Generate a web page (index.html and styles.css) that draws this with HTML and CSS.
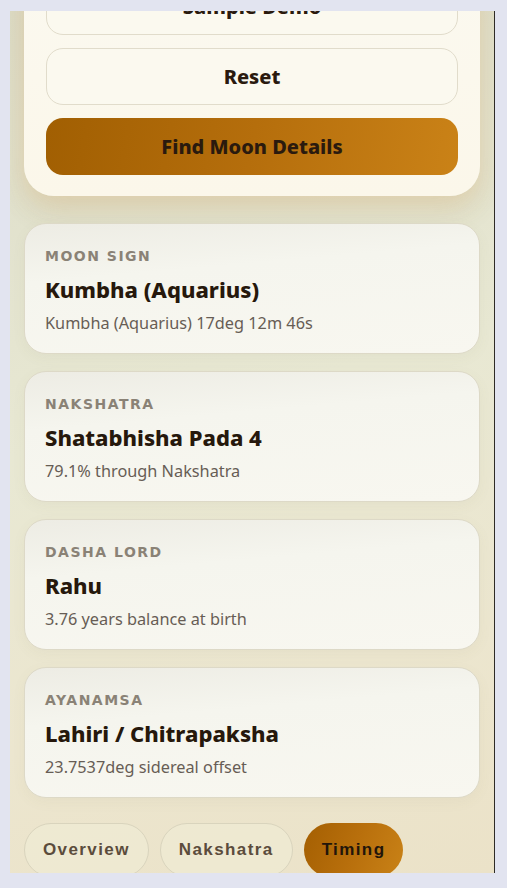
FILE: index.html
```html
<!DOCTYPE html>
<html lang="en">
<head>
<meta charset="UTF-8">
<title>Moon Details</title>
<link rel="stylesheet" href="styles.css">
</head>
<body>
<div class="frame">
  <div class="scroller">
    <!-- Input form (scrolled partly out of view) -->
    <div class="form-card">
      <button class="btn">Sample Demo</button>
      <button class="btn">Reset</button>
      <button class="btn primary">Find Moon Details</button>
    </div>

    <div class="result">
      <div class="label">Moon Sign</div>
      <div class="value">Kumbha (Aquarius)</div>
      <div class="note">Kumbha (Aquarius) 17deg 12m 46s</div>
    </div>
    <div class="result">
      <div class="label">Nakshatra</div>
      <div class="value">Shatabhisha Pada 4</div>
      <div class="note">79.1% through Nakshatra</div>
    </div>
    <div class="result">
      <div class="label">Dasha Lord</div>
      <div class="value">Rahu</div>
      <div class="note">3.76 years balance at birth</div>
    </div>
    <div class="result">
      <div class="label">Ayanamsa</div>
      <div class="value">Lahiri / Chitrapaksha</div>
      <div class="note">23.7537deg sidereal offset</div>
    </div>

    <div class="tabs">
      <button class="tab">Overview</button>
      <button class="tab">Nakshatra</button>
      <button class="tab active">Timing</button>
    </div>
  </div>
</div>
</body>
</html>
```

FILE: styles.css
```css
body {
    margin: 0;
    padding: 11px 11px 15px 10px;
    background: #e2e4f0;
    font-family: "Noto Sans", "Open Sans", sans-serif;
}
.frame {
    width: 484px;
    height: 862px;
    overflow: hidden;
    border-right: 1px solid #2e2b26;
    background: linear-gradient(165deg, #dcdcc8 0%, #e8e8d3 45%, #ece6cf 75%, #ebe2c8 100%);
}
.scroller {
    margin-top: -55px;
    padding: 0 14px 40px 14px;
    display: flex;
    flex-direction: column;
    gap: 17px;
}
.form-card {
    background: linear-gradient(180deg, #fbf9f0 0%, #fbf7ea 100%);
    border-radius: 30px;
    padding: 22px 22px 21px 22px;
    display: flex;
    flex-direction: column;
    gap: 13px;
    box-shadow: 0 8px 26px rgba(240, 190, 120, 0.3), 0 18px 30px rgba(90, 80, 40, 0.08);
    margin-bottom: 10px;
}
.btn {
    height: 57px;
    border: 1px solid #e1dccb;
    border-radius: 17px;
    background: #fbf9ef;
    color: #2a1a0e;
    font-family: "Noto Sans", sans-serif;
    font-size: 20px;
    font-weight: 800;
    cursor: pointer;
}
.btn.primary {
    border: none;
    background: linear-gradient(100deg, #a15f02 0%, #b56e0c 50%, #ca8217 100%);
}
.result {
    background: linear-gradient(175deg, #edece4 0%, #f5f5ee 35%, #f8f7f0 100%);
    border: 1px solid #ddd9c7;
    border-radius: 22px;
    padding: 23px 20px 19px 20px;
    box-shadow: 0 4px 14px rgba(120, 110, 70, 0.05);
}
.label {
    font-family: "DejaVu Sans", sans-serif;
    font-weight: 700;
    font-size: 14px;
    letter-spacing: 1.5px;
    text-transform: uppercase;
    color: #8a8276;
    line-height: 18px;
}
.value {
    margin-top: 10px;
    font-size: 22px;
    font-weight: 800;
    color: #26180c;
    line-height: 28px;
}
.note {
    margin-top: 9px;
    font-size: 16.3px;
    color: #675d55;
    line-height: 22px;
}
.tabs {
    display: flex;
    gap: 11px;
    margin-top: 8px;
}
.tab {
    height: 54px;
    padding: 0 18px;
    border: 1px solid #d9d4bd;
    border-radius: 27px;
    background: rgba(240, 236, 214, 0.6);
    font-family: "Liberation Sans", Arial, sans-serif;
    font-size: 17px;
    font-weight: 700;
    letter-spacing: 1.4px;
    color: #5b4c3c;
    cursor: pointer;
}
.tab.active {
    border: none;
    padding: 0 18px;
    color: #22150a;
    background: linear-gradient(110deg, #a45f02 0%, #b86f0c 50%, #c98217 100%);
}
```
